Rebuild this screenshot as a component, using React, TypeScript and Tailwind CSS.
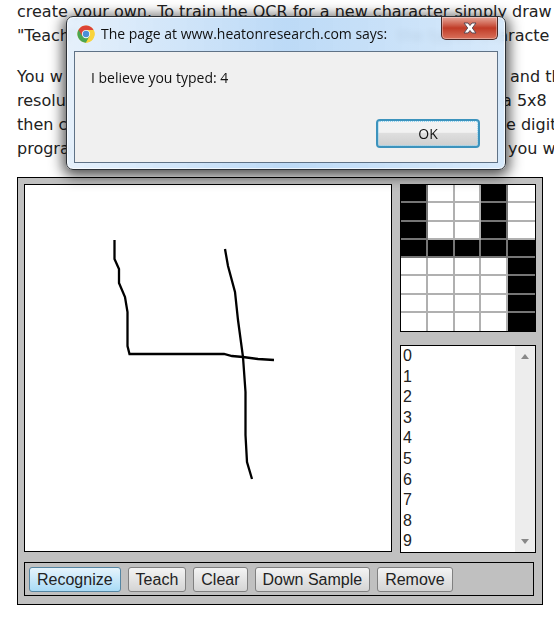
const glyphRows = ['10010', '10010', '10010', '11111', '00001', '00001', '00001', '00001']

const letters = ['0', '1', '2', '3', '4', '5', '6', '7', '8', '9']

const actions = ['Recognize', 'Teach', 'Clear', 'Down Sample', 'Remove']

function ChromeIcon() {
  return (
    <svg viewBox="0 0 48 48" className="size-[18px] shrink-0" aria-hidden="true">
      <circle cx="24" cy="24" r="23" fill="#f7d038" />
      <path d="M24 24 L4.1 12.5 A23 23 0 0 0 24 47 L34 29 Z" fill="#4aa651" />
      <path d="M24 13 H44.2 A23 23 0 0 1 24 47 L34 29 Z" fill="#f9d43c" />
      <path d="M4.1 12.5 A23 23 0 0 1 44.2 13 H24 L14 29 Z" fill="#dc4437" />
      <circle cx="24" cy="24" r="11" fill="#f4f8fc" />
      <circle cx="24" cy="24" r="8.5" fill="#4a8fd6" />
    </svg>
  )
}

function Article() {
  return (
    <article className="grid grid-cols-[380px_1fr] gap-y-[17px] whitespace-nowrap pl-[17px] text-base leading-6 text-[#222]">
      <p className="col-span-2">
        create your own. To train the OCR for a new character simply draw
      </p>
      <div className="col-span-2 -mt-[17px] grid grid-cols-subgrid">
        <p>"Teach"</p>
        <p>the typed characte</p>
      </div>
      <p>
        You w
        <br />
        resolu
        <br />
        then c
        <br />
        progra
      </p>
      <p className="flex flex-col pl-[105px]">
        <span className="pl-2">and th</span>
        <span>a 5x8</span>
        <span className="pl-1">e digit</span>
        <span className="pl-1.5">you w</span>
      </p>
    </article>
  )
}

function AlertDialog() {
  return (
    <div
      role="dialog"
      aria-labelledby="alert-title"
      className="absolute top-4 right-[48px] left-[66px] rounded-[7px] border border-[#2b3036] bg-linear-to-r from-[#e3effb]/90 via-[#b9d8f6]/95 to-[#d3e7fa]/90 px-[7px] pb-[6px] shadow-[0_3px_14px_3px_rgba(0,0,0,0.7),inset_0_0_0_1px_rgba(255,255,255,0.7)] backdrop-blur-[3px] font-['Open_Sans','Noto_Sans',sans-serif] text-[#111]"
    >
      <div className="flex h-[34px] items-start">
        <h1 id="alert-title" className="flex items-center gap-[6px] pt-[7px] pl-[3px] text-sm leading-5">
          <ChromeIcon />
          The page at www.heatonresearch.com says:
        </h1>
        <button
          type="button"
          aria-label="Close"
          className="ml-auto flex h-[23px] w-[57px] items-center justify-center rounded-b-[5px] border border-t-0 border-[#4b2926] bg-linear-to-b from-[#e5a79b] from-0% via-[#c03a26] via-50% to-[#d9705a] shadow-[inset_0_0_0_1px_rgba(255,255,255,0.35)]"
        >
          <svg viewBox="0 0 14 12" className="h-3 w-3.5" aria-hidden="true">
            <path d="M1 1h4l2 2.5L9 1h4L9.3 6l3.7 5H9L7 8.500 5 11H1l3.700-5z" fill="#fff" stroke="#5b4a55" strokeWidth="1" />
          </svg>
        </button>
      </div>
      <div className="flex h-[112px] flex-col border border-[#5f7286] bg-[#f0f0f0] px-4 pt-4 pb-[14px]">
        <p className="text-sm leading-5">I believe you typed: 4</p>
        <button
          type="button"
          className="mt-auto mr-px h-[29px] w-[104px] self-end rounded-[4px] border-2 border-[#3c93bd] bg-linear-to-b from-[#f2f2f2] from-45% via-[#dedede] via-50% to-[#cfcfcf] text-sm leading-5 outline-1 -outline-offset-3 outline-[#8fd4f2] outline-dotted"
        >
          OK
        </button>
      </div>
    </div>
  )
}

function DrawingPad() {
  return (
    <div className="flex-1 border border-black bg-white">
      <svg viewBox="25 185 366 366" className="block w-full" aria-label="Drawing area">
        <g fill="none" stroke="#000" strokeWidth="2.300">
          <path d="M114.500 240V259L119 269V283L125 297L127.500 312V346L129.500 354H224L232 356L243 357L258 359L274 360" />
          <path d="M225 249L228 266L235 292L238 320L243 357L245.500 392V435L247 462L252 479" />
        </g>
      </svg>
    </div>
  )
}

function SampleGrid() {
  return (
    <div className="grid h-[148px] grid-cols-5 grid-rows-8 border border-black">
      {glyphRows.join('').split('').map((bit, i) => (
        <div
          key={i}
          className={`border-r-2 border-b-2 nth-[5n]:border-r-0 nth-last-[-n+5]:border-b-0 ${
            bit === '1' ? 'border-[#757575] bg-black' : 'border-[#b0b0b0] bg-white'
          }`}
        />
      ))}
    </div>
  )
}

function LetterList() {
  return (
    <div className="flex h-[208px] border border-black bg-white">
      <select
        size={10}
        aria-label="Known letters"
        className="h-full flex-1 appearance-none overflow-hidden bg-white text-base leading-5 text-[#222] outline-none [scrollbar-width:none]"
      >
        {letters.map((letter) => (
          <option key={letter} className="h-[10%] px-0.5 pt-px pb-0">
            {letter}
          </option>
        ))}
      </select>
      <div className="flex w-5 flex-col items-center justify-between bg-[#ededed] py-2" aria-hidden="true">
        <svg viewBox="0 0 8 5" className="h-[5px] w-2">
          <path d="M0 5L4 0L8 5z" fill="#888" />
        </svg>
        <svg viewBox="0 0 8 5" className="h-[5px] w-2">
          <path d="M0 0L4 5L8 0z" fill="#888" />
        </svg>
      </div>
    </div>
  )
}

export default function App() {
  return (
    <main className="relative overflow-hidden bg-white pb-[13px] font-['DejaVu_Sans',sans-serif]">
      <Article />
      <section className="mt-4 mr-[11px] ml-[17px] border border-black bg-[#c0c0c0] px-1.5 pt-1.5 pb-2 font-['Liberation_Sans',Arial,sans-serif]">
        <div className="flex items-start gap-2">
          <DrawingPad />
          <div className="flex w-[136px] flex-col gap-[13px]">
            <SampleGrid />
            <LetterList />
          </div>
        </div>
        <div className="mt-[9px] mr-0.5 flex gap-[7px] border border-black p-1 pb-[3px]">
          {actions.map((action, i) => (
            <button
              key={action}
              type="button"
              className={`h-[25px] rounded-[3px] border px-[7px] text-base leading-5 whitespace-nowrap text-[#222] ${
                i === 0
                  ? 'border-[#5586a3] bg-linear-to-b from-[#e6f4fc] to-[#a9dbf6]'
                  : 'border-[#808080] bg-linear-to-b from-[#f4f4f4] to-[#d4d4d4]'
              }`}
            >
              {action}
            </button>
          ))}
        </div>
      </section>
      <AlertDialog />
    </main>
  )
}
